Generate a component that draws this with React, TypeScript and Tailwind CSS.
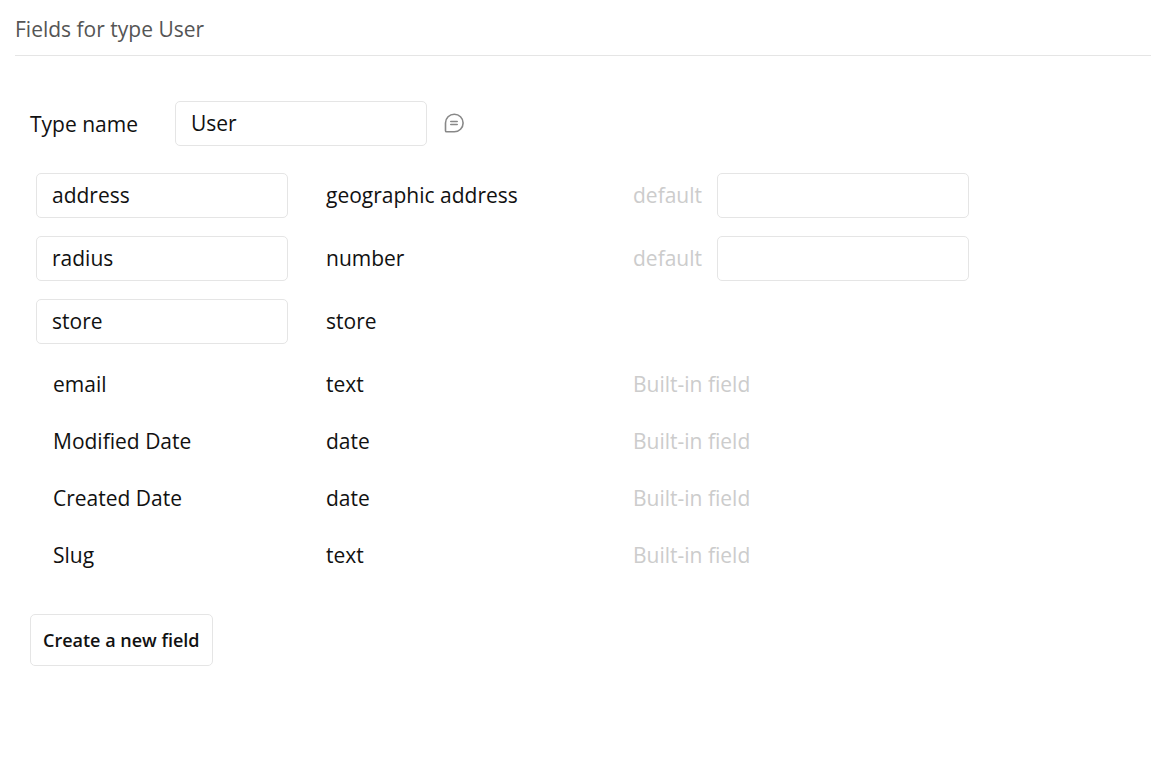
type Field = {
  name: string;
  type: string;
  hasDefault?: boolean;
};

const customFields: Field[] = [
  { name: "address", type: "geographic address", hasDefault: true },
  { name: "radius", type: "number", hasDefault: true },
  { name: "store", type: "store" },
];

const builtInFields: Field[] = [
  { name: "email", type: "text" },
  { name: "Modified Date", type: "date" },
  { name: "Created Date", type: "date" },
  { name: "Slug", type: "text" },
];

const inputClass =
  "h-[45px] w-[252px] rounded-[5px] border border-[#e5e5e5] bg-white px-[15px] pb-0.5 text-[#111111] outline-none focus:border-gray-400";

function CommentIcon() {
  return (
    <svg
      className="size-5"
      viewBox="0 0 20 20"
      fill="none"
      stroke="currentColor"
      strokeWidth="1.6"
      strokeLinecap="round"
      strokeLinejoin="round"
    >
      <path d="M10.3 1.2a8.8 8.8 0 0 1 0 17.6H2.6a1.1 1.1 0 0 1-1.1-1.1V10a8.8 8.8 0 0 1 8.8-8.8Z" />
      <path d="M6.8 8.5h6.4M6.8 11.5h6.4" />
    </svg>
  );
}

export default function App() {
  return (
    <main className="pl-[15px] font-['Open_Sans',sans-serif] text-[21px] leading-7 text-[#111111]">
      <h1 className="border-b border-[#e5e5e5] pt-[15px] pb-3 text-[#555555]">
        Fields for type User
      </h1>

      <div className="pt-[45px] pl-[15px]">
        <div className="flex items-center">
          <label htmlFor="type-name" className="w-[145px]">
            Type name
          </label>
          <input id="type-name" className={inputClass} defaultValue="User" />
          <button
            aria-label="Add a note"
            className="ml-[17px] pb-0.5 text-[#888888]"
          >
            <CommentIcon />
          </button>
        </div>

        <div className="mt-[27px] flex flex-col gap-[18px] pl-[6px]">
          {customFields.map((field) => (
            <div key={field.name} className="flex items-center">
              <input
                aria-label={`${field.name} field name`}
                className={inputClass}
                defaultValue={field.name}
              />
              <div className="ml-[38px] w-[307px] pb-0.5">{field.type}</div>
              {field.hasDefault && (
                <label className="flex items-center gap-[15px] text-[#cccccc]">
                  <span className="pb-0.5">default</span>
                  <input className={inputClass} />
                </label>
              )}
            </div>
          ))}
        </div>

        <div className="mt-[26px] flex flex-col gap-[29px] pl-[23px]">
          {builtInFields.map((field) => (
            <div key={field.name} className="flex items-center">
              <div className="w-[273px]">{field.name}</div>
              <div className="w-[307px]">{field.type}</div>
              <div className="text-[#cccccc]">Built-in field</div>
            </div>
          ))}
        </div>

        <button className="mt-[45px] h-[52px] rounded-[5px] border border-[#e5e5e5] bg-white px-3 text-[18px] font-semibold hover:bg-gray-50">
          Create a new field
        </button>
      </div>
    </main>
  );
}
